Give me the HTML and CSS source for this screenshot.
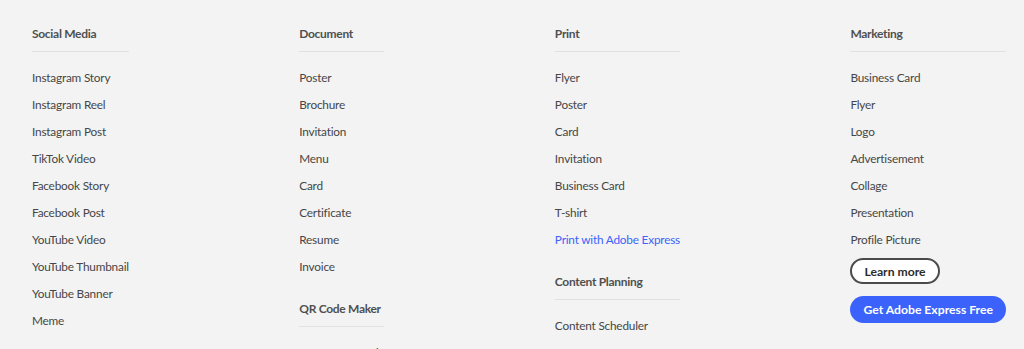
FILE: index.html
```html
<!DOCTYPE html>
<html>
<head>
<meta charset="utf-8">
<meta name="viewport" content="width=device-width, initial-scale=1.0">
<title>Footer links</title>
<link rel="stylesheet" href="styles.css">
</head>
<body>
    <div class="cols">
        <div class="col">
            <div class="group">
                <h3>Social Media</h3>
                <ul>
                    <li><a href="#">Instagram Story</a></li>
                    <li><a href="#">Instagram Reel</a></li>
                    <li><a href="#">Instagram Post</a></li>
                    <li><a href="#">TikTok Video</a></li>
                    <li><a href="#">Facebook Story</a></li>
                    <li><a href="#">Facebook Post</a></li>
                    <li><a href="#">YouTube Video</a></li>
                    <li><a href="#">YouTube Thumbnail</a></li>
                    <li><a href="#">YouTube Banner</a></li>
                    <li><a href="#">Meme</a></li>
                </ul>
            </div>
        </div>
        <div class="col">
            <div class="group">
                <h3>Document</h3>
                <ul>
                    <li><a href="#">Poster</a></li>
                    <li><a href="#">Brochure</a></li>
                    <li><a href="#">Invitation</a></li>
                    <li><a href="#">Menu</a></li>
                    <li><a href="#">Card</a></li>
                    <li><a href="#">Certificate</a></li>
                    <li><a href="#">Resume</a></li>
                    <li><a href="#">Invoice</a></li>
                </ul>
            </div>
            <div class="group">
                <h3>QR Code Maker</h3>
                <ul>
                    <li><a href="#">Custom QR code</a></li>
                </ul>
            </div>
        </div>
        <div class="col">
            <div class="group">
                <h3>Print</h3>
                <ul>
                    <li><a href="#">Flyer</a></li>
                    <li><a href="#">Poster</a></li>
                    <li><a href="#">Card</a></li>
                    <li><a href="#">Invitation</a></li>
                    <li><a href="#">Business Card</a></li>
                    <li><a href="#">T-shirt</a></li>
                    <li><a href="#" class="blue">Print with Adobe Express</a></li>
                </ul>
            </div>
            <div class="group">
                <h3>Content Planning</h3>
                <ul>
                    <li><a href="#">Content Scheduler</a></li>
                </ul>
            </div>
        </div>
        <div class="col">
            <div class="group">
                <h3>Marketing</h3>
                <ul>
                    <li><a href="#">Business Card</a></li>
                    <li><a href="#">Flyer</a></li>
                    <li><a href="#">Logo</a></li>
                    <li><a href="#">Advertisement</a></li>
                    <li><a href="#">Collage</a></li>
                    <li><a href="#">Presentation</a></li>
                    <li><a href="#">Profile Picture</a></li>
                </ul>
            </div>
            <div class="btns">
                <a href="#" class="btn outline">Learn more</a>
                <a href="#" class="btn fill">Get Adobe Express Free</a>
            </div>
        </div>
    </div>
</body>
</html>
```

FILE: styles.css
```css
*{
    font-family: 'Lato', 'Open Sans', sans-serif;
    box-sizing: border-box;
}
body{
    margin:0;
    background:#f3f3f3;
    height:349px;
    overflow:hidden;
}
.cols{
    display:flex;
    justify-content: space-between;
    align-items: flex-start;
    padding:25px 18px 0 32px;
}
.col{
    display:flex;
    flex-direction: column;
}
.group{
    display:flex;
    flex-direction: column;
}
.group + .group{
    margin-top:20px;
}
h3{
    margin:0;
    font-size:12px;
    letter-spacing:-0.3px;
    line-height:17px;
    font-weight:700;
    color:#505050;
    padding-bottom:9px;
    border-bottom:1px solid #e1e1e1;
}
ul{
    list-style:none;
    margin:12px 0 0 0;
    padding:0;
}
li{
    line-height:27px;
    font-size:11.8px;
    letter-spacing:-0.2px;
}
a{
    color:#464646;
    text-decoration: none;
}
a.blue{
    color:#3b63fb;
}
.btns{
    display:flex;
    flex-direction: column;
    align-items: flex-start;
    gap:12px;
    margin-top:5px;
}
.btn{
    display:flex;
    align-items: center;
    height:26px;
    border-radius:14px;
    font-size:12.2px;
    font-weight:700;
}
.outline{
    border:2px solid #4b4b4b;
    background:#fff;
    color:#2c2c2c;
    padding:0 12px;
}
.fill{
    background:#3b63fb;
    color:#fff;
    height:27px;
    padding:0 13px;
}
```
